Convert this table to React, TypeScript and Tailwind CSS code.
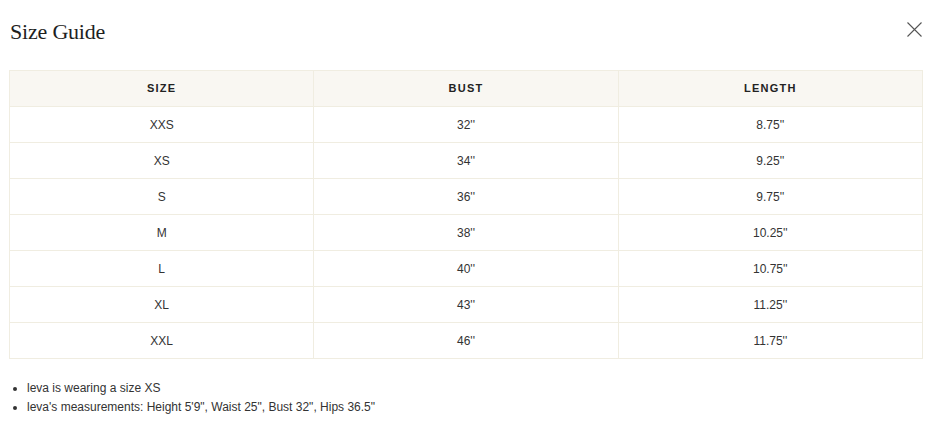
const rows = [
    ["XXS", "32''", "8.75''"],
    ["XS", "34''", "9.25''"],
    ["S", "36''", "9.75''"],
    ["M", "38''", "10.25''"],
    ["L", "40''", "10.75''"],
    ["XL", "43''", "11.25''"],
    ["XXL", "46''", "11.75''"],
];

export default function App() {
    return (
        <div className="w-[930px] h-[447px] bg-white text-[#222] font-['Liberation_Sans',Arial,sans-serif]">
            <div className="flex flex-row items-start justify-between pl-[10px] pr-[8px] pt-[21px] h-[52px]">
                <h2 className="text-[22px] leading-none font-['Liberation_Serif',serif] text-[#1f1f1f] tracking-[-0.2px]">Size Guide</h2>
                <button className="w-[15px] h-[15px] mt-[1px] flex items-center justify-center text-[#555]">
                    <svg width="15" height="15" viewBox="0 0 15 15" fill="none" stroke="currentColor" strokeWidth="1.1">
                        <path d="M0.5 0.5L14.5 14.5M14.5 0.5L0.5 14.5" />
                    </svg>
                </button>
            </div>
            <div className="mx-[9px] mt-[18px] w-[914px]">
                <table className="w-full border-collapse text-[12px] text-[#333] table-fixed">
                    <thead>
                        <tr className="bg-[#f9f7f2] h-[36px]">
                            <th className="border border-[#f0ede1] font-semibold text-[11px] tracking-[1.2px] text-[#222]">SIZE</th>
                            <th className="border border-[#f0ede1] font-semibold text-[11px] tracking-[1.2px] text-[#222]">BUST</th>
                            <th className="border border-[#f0ede1] font-semibold text-[11px] tracking-[1.2px] text-[#222]">LENGTH</th>
                        </tr>
                    </thead>
                    <tbody>
                        {rows.map((row, ind) => {
                            return (
                                <tr key={ind} className="h-[36px]">
                                    {row.map((cell, i) => (
                                        <td key={i} className="border border-[#f0ede1] text-center">{cell}</td>
                                    ))}
                                </tr>
                            )
                        })}
                    </tbody>
                </table>
            </div>
            <ul className="mt-[20px] pl-[27px] list-disc text-[12px] text-[#333] leading-[19px]">
                <li>leva is wearing a size XS</li>
                <li>leva's measurements: Height 5'9", Waist 25", Bust 32", Hips 36.5"</li>
            </ul>
        </div>
    );
}
